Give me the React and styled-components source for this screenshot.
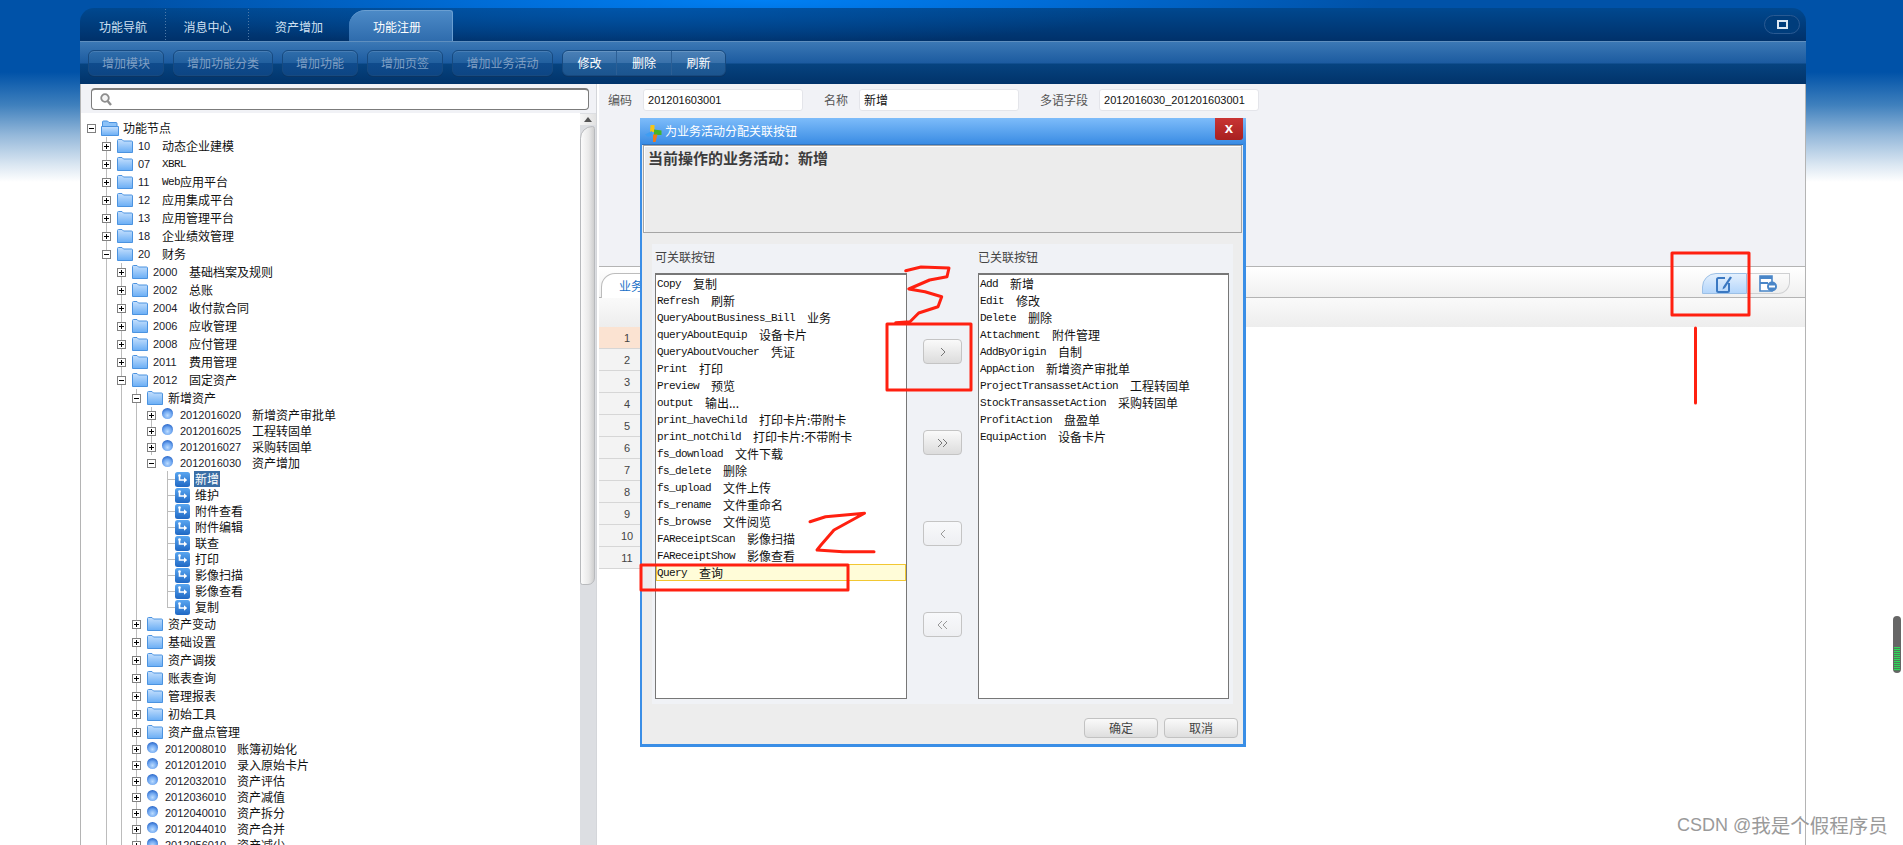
import React from 'react';
import styled, { createGlobalStyle } from 'styled-components';

const CJK = '"Noto Sans CJK SC", "Liberation Sans", sans-serif';
const LATIN = '"Liberation Sans", "Noto Sans CJK SC", sans-serif';
const MONO = '"Liberation Mono", monospace';

const Global = createGlobalStyle`
  html, body { margin: 0; padding: 0; height: 845px; overflow: hidden; background: #fff; }
  * { box-sizing: border-box; }
`;

const Page = styled.div`
  position: relative;
  width: 1903px;
  height: 845px;
  overflow: hidden;
  padding: 8px 97px 0 80px;
  font: 12px/16px ${CJK};
  color: #111;
  background:
    radial-gradient(ellipse 620px 46px at 40% 0, #0080f4 0%, rgba(0, 120, 235, 0.7) 45%, rgba(0, 90, 180, 0) 100%),
    linear-gradient(180deg, #0052a8 0, #0052a8 72px, #3f80bd 105px, #94b8da 135px, #dbe7f2 165px, #fff 182px);
`;

const Window = styled.div`
  display: flex;
  flex-direction: column;
  height: 837px;
  border-radius: 14px 14px 0 0;
  overflow: hidden;
`;

/* ---------- top tabs ---------- */
const TabStrip = styled.div`
  flex: none;
  height: 33px;
  display: flex;
  align-items: flex-end;
  position: relative;
  background:
    radial-gradient(ellipse 500px 40px at 32% 0, rgba(0, 90, 180, 0.7), rgba(0, 90, 180, 0)),
    linear-gradient(180deg, #00488f, #00316a);
`;
const Tab = styled.div`
  width: ${p => p.$w}px;
  height: ${p => (p.$active ? 31 : 33)}px;
  display: flex;
  align-items: center;
  justify-content: center;
  padding-top: ${p => (p.$active ? 2 : 4)}px;
  padding-right: ${p => (p.$active ? 7 : 0)}px;
  color: ${p => (p.$active ? '#fff' : '#cfe0f2')};
  font-size: 12px;
  ${p => (p.$sep ? 'background: linear-gradient(#4f7aa8 50%, transparent 50%) right 4px / 1px 3px repeat-y;' : '')}
  ${p =>
    p.$active
      ? `border-radius: 16px 3px 0 0;
         background: linear-gradient(180deg, #4c8ac7, #2f6cad);
         border-top: 1px solid #6a9fd2;
         border-right: 1px solid #6a9fd2;`
      : ''}
`;
const MaxButton = styled.div`
  position: absolute;
  right: 6px;
  top: 7px;
  width: 36px;
  height: 19px;
  border-radius: 10px;
  border: 1px solid #2a5a92;
  background: #003d7c;
  display: flex;
  align-items: center;
  justify-content: center;
`;
const MaxGlyph = styled.span`
  display: block;
  width: 11px;
  height: 9px;
  border: 2px solid #dce8f4;
  background: #003d7c;
`;

/* ---------- toolbar ---------- */
const Toolbar = styled.div`
  flex: none;
  height: 43px;
  padding: 8px 0 0 8px;
  display: flex;
  align-items: flex-start;
  gap: 9px;
  border-top: 1px solid #5f8fbf;
  background: linear-gradient(180deg, #3b78b5 0, #1c5ba0 21px, #06437f 22px, #01336a 100%);
`;
const ToolButton = styled.div`
  width: ${p => p.$w}px;
  height: 26px;
  border-radius: 6px;
  border: 1px solid #174a80;
  box-shadow: inset 0 1px 0 rgba(255, 255, 255, 0.12), 0 1px 0 #0b3564;
  background: linear-gradient(180deg, #2f6dab 0, #22609f 48%, #0f4b8c 52%, #0d4584 100%);
  color: #7f9fc4;
  display: flex;
  align-items: center;
  justify-content: center;
`;
const ToolGroup = styled.div`
  display: flex;
  height: 26px;
  border-radius: 6px;
  border: 1px solid #174a80;
  overflow: hidden;
  box-shadow: inset 0 1px 0 rgba(255, 255, 255, 0.15), 0 1px 0 #0b3564;
  background: linear-gradient(180deg, #4a80b7 0, #3a72ab 48%, #1f5c98 52%, #1c558f 100%);
`;
const GroupButton = styled.div`
  width: ${p => p.$w}px;
  display: flex;
  align-items: center;
  justify-content: center;
  color: #fff;
  & + & { border-left: 1px solid #2c5f95; }
`;

/* ---------- content ---------- */
const Content = styled.div`
  flex: 1;
  min-height: 0;
  display: flex;
  border-left: 1px solid #b4b4b4;
  border-right: 1px solid #b4b4b4;
  background: #fff;
`;
const LeftPanel = styled.div`
  flex: none;
  width: 516px;
  display: flex;
  flex-direction: column;
  border-right: 1px solid #d4d6da;
`;
const SearchRow = styled.div`
  flex: none;
  height: 29px;
  padding: 4px 8px 3px 10px;
  background: #f1f2f6;
`;
const SearchBox = styled.div`
  height: 22px;
  width: 498px;
  border: 1px solid #7b7b7b;
  border-top-width: 2px;
  border-radius: 4px;
  background: #fff;
  display: flex;
  align-items: center;
  padding-left: 8px;
`;
const TreeArea = styled.div`
  flex: 1;
  min-height: 0;
  display: flex;
  overflow: hidden;
`;
const TreeScroll = styled.div`
  flex: 1;
  min-width: 0;
  overflow: hidden;
  padding: 6px 0 0 11px;
`;
const ScrollBar = styled.div`
  flex: none;
  width: 16px;
  display: flex;
  flex-direction: column;
  background: #dcdee2;
`;
const ScrollArrow = styled.div`
  flex: none;
  height: 11px;
  margin-top: 1px;
  display: flex;
  justify-content: center;
  align-items: center;
  background: linear-gradient(90deg, #f6f6f6, #e2e2e2);
  &::before {
    content: '';
    border-left: 4px solid transparent;
    border-right: 4px solid transparent;
    border-bottom: 5px solid #555;
  }
`;
const ScrollThumb = styled.div`
  flex: none;
  height: 459px;
  margin: 1px 1px 0 0;
  border-radius: 14px 3px 8px 3px;
  border: 1px solid #b8babd;
  background: linear-gradient(90deg, #fbfbfb, #e9e9e9 60%, #cfcfcf);
`;

const Branch = styled.div`
  border-left: 1px solid ${p => (p.$line ? '#bcbcbc' : 'transparent')};
`;
const Kids = styled.div`
  margin-left: 14px;
`;
const LeafList = styled.div`
  margin-left: 15px;
`;
const RootRow = styled.div`
  margin-left: -5px;
  height: 18px;
  display: flex;
  align-items: center;
  white-space: nowrap;
`;
const Row = styled.div`
  margin-left: -5px;
  height: ${p => p.$h}px;
  display: flex;
  align-items: center;
  white-space: nowrap;
`;
const ExpanderBox = styled.span`
  flex: none;
  width: 9px;
  height: 9px;
  border: 1px solid #808080;
  background: #fff;
  position: relative;
  &::before {
    content: '';
    position: absolute;
    left: 1px;
    right: 1px;
    top: 3px;
    height: 1px;
    background: #000;
  }
  &::after {
    content: '';
    display: ${p => (p.$open ? 'none' : 'block')};
    position: absolute;
    top: 1px;
    bottom: 1px;
    left: 3px;
    width: 1px;
    background: #000;
  }
`;
const IconSlot = styled.span`
  flex: none;
  display: flex;
  margin-left: ${p => p.$ml}px;
  margin-right: ${p => p.$mr}px;
  align-self: ${p => (p.$top ? 'flex-start' : 'center')};
  margin-top: ${p => p.$mt || 0}px;
`;
const Code = styled.span`
  flex: none;
  width: ${p => p.$len * 6 + 12}px;
  font: 11px/16px ${LATIN};
  color: #1a1a2a;
`;
const Name = styled.span`
  color: #111;
`;
const MonoText = styled.span`
  font: 11px/16px ${MONO};
  letter-spacing: -0.6px;
`;
const LeafRow = styled.div`
  height: 16px;
  display: flex;
  align-items: flex-start;
  white-space: nowrap;
`;
const LeafStub = styled.span`
  flex: none;
  width: 8px;
  height: ${p => (p.$last ? 9 : 16)}px;
  border-left: 1px solid #bcbcbc;
  background: linear-gradient(#bcbcbc, #bcbcbc) left 8px / 100% 1px no-repeat;
`;
const LeafLabel = styled.span`
  margin-left: 4px;
  padding: 0 1px;
  height: 16px;
  line-height: 16px;
  background: ${p => (p.$selected ? '#3a6ea5' : 'transparent')};
  color: ${p => (p.$selected ? '#fff' : '#111')};
`;

/* ---------- right ---------- */
const RightPanel = styled.div`
  flex: 1;
  min-width: 0;
  margin-left: 2px;
  display: flex;
  flex-direction: column;
  background: #fff;
`;
const FormArea = styled.div`
  flex: none;
  height: 182px;
  padding: 5px 0 0 9px;
  display: flex;
  align-items: flex-start;
  gap: 21px;
  background: #f1f2f6;
`;
const Field = styled.div`
  display: flex;
  align-items: center;
  gap: 11px;
`;
const FieldLabel = styled.span`
  color: #555;
`;
const FieldInput = styled.div`
  width: 160px;
  height: 22px;
  padding-left: 4px;
  border: 1px solid #e4e5ea;
  border-radius: 3px;
  background: #fff;
  display: flex;
  align-items: center;
  font: ${p => (p.$cjk ? `12px/16px ${CJK}` : `11px/16px ${LATIN}`)};
  color: #111;
`;
const SubTabBar = styled.div`
  flex: none;
  height: 32px;
  padding: 6px 15px 0 2px;
  display: flex;
  align-items: flex-start;
  justify-content: space-between;
  border-top: 1px solid #b4b4b4;
  border-bottom: 1px solid #b4b4b4;
  background: linear-gradient(180deg, #fff, #f0f0f0);
`;
const SubTab = styled.div`
  width: 90px;
  height: 25px;
  border: 1px solid #bcbcbc;
  border-bottom: none;
  border-radius: 14px 4px 0 0;
  background: #fff;
  color: #1a70c8;
  padding: 4px 0 0 17px;
`;
const IconTabs = styled.div`
  display: flex;
  width: 88px;
  height: 21px;
`;
const IconTab = styled.div`
  flex: 1;
  display: flex;
  align-items: center;
  justify-content: center;
  ${p =>
    p.$active
      ? `border: 1px solid #9cc0e6; border-radius: 14px 0 0 0;
         background: linear-gradient(180deg, #e4f0fd, #b4d6fb);`
      : `border: 1px solid #cfd0d2; border-left: none; border-radius: 0 0 12px 0;
         background: linear-gradient(180deg, #fbfbfb, #eeeeee);`}
`;
const GridHead = styled.div`
  flex: none;
  height: 29px;
  background: linear-gradient(180deg, #fafafa, #ededed);
`;
const RowNumbers = styled.div`
  width: 56px;
`;
const RowNumber = styled.div`
  height: 22px;
  display: flex;
  align-items: center;
  justify-content: center;
  border-bottom: 1px solid #d6d6d6;
  background: ${p => (p.$active ? '#fbe3d2' : '#f3f3f3')};
  font: 11px/16px ${LATIN};
  color: #444;
`;

/* ---------- dialog ---------- */
const Dialog = styled.div`
  position: absolute;
  left: 640px;
  top: 118px;
  width: 606px;
  height: 629px;
  display: flex;
  flex-direction: column;
  background: #3a8ee6;
  z-index: 5;
`;
const DialogTitle = styled.div`
  flex: none;
  height: 26px;
  display: flex;
  align-items: flex-start;
  padding-left: 5px;
  background: linear-gradient(180deg, #7dbcfa, #3a8ce4);
  color: #fff;
`;
const TitleText = styled.span`
  margin-left: 3px;
  line-height: 25px;
  flex: 1;
`;
const CloseBtn = styled.div`
  width: 28px;
  height: 22px;
  margin-right: 3px;
  border-radius: 0 0 3px 3px;
  background: linear-gradient(180deg, #c83434, #a82020);
  color: #fff;
  font: bold 15px/19px "Liberation Sans", sans-serif;
  text-align: center;
`;
const DialogBody = styled.div`
  flex: 1;
  min-height: 0;
  margin: 0 3px 3px 2px;
  background: #ededed;
  display: flex;
  flex-direction: column;
  border-top: 1px solid #2f72bd;
`;
const DialogHeader = styled.div`
  flex: none;
  height: 88px;
  margin: 0 1px 0 1px;
  padding: 2px 0 0 4px;
  border: 1px solid #a5a5a5;
  box-shadow: inset 1px 1px 0 #fff;
  font: bold 15px/20px ${CJK};
  color: #3c3c3c;
  background: #ececec;
`;
const Selector = styled.div`
  flex: none;
  height: 460px;
  margin: 11px 10px 0 10px;
  padding: 4px 3px;
  display: grid;
  grid-template-columns: 252px 71px 251px;
  grid-template-rows: 25px 426px;
  background: #f0f2f6;
`;
const ListTitle = styled.div`
  color: #444;
  line-height: 18px;
`;
const MoveColumn = styled.div`
  display: flex;
  flex-direction: column;
  align-items: center;
  gap: 66px;
  padding-top: 66px;
`;
const MoveBtn = styled.div`
  width: 39px;
  height: 25px;
  border-radius: 4px;
  border: 1px solid #c4c4c4;
  display: flex;
  align-items: center;
  justify-content: center;
  background: ${p => (p.$on ? 'linear-gradient(180deg, #fafafa, #dcdcdc)' : 'linear-gradient(180deg, #f8f9fb, #eeeff2)')};
`;
const ListBox = styled.div`
  background: #fff;
  border: 1px solid #777;
  border-top-width: 2px;
  overflow: hidden;
`;
const ListRow = styled.div`
  height: 17px;
  display: flex;
  align-items: center;
  white-space: nowrap;
  padding-left: 1px;
  ${p => (p.$hl ? 'background: #fffcd8; box-shadow: inset 0 0 0 1px #f2c732;' : '')}
`;
const ListName = styled.span`
  margin-left: 12px;
  line-height: 16px;
`;
const DialogFooter = styled.div`
  flex: 1;
  display: flex;
  justify-content: flex-end;
  align-items: flex-start;
  gap: 6px;
  padding: 14px 5px 0 0;
`;
const FootBtn = styled.div`
  width: 74px;
  height: 20px;
  border: 1px solid #c2c2c2;
  border-radius: 4px;
  background: linear-gradient(180deg, #fafafa, #dedede);
  color: #444;
  display: flex;
  align-items: center;
  justify-content: center;
`;

/* ---------- overlays ---------- */
const Annotations = styled.svg`
  position: absolute;
  left: 0;
  top: 0;
  z-index: 10;
  pointer-events: none;
`;
const SideWidget = styled.div`
  position: absolute;
  left: 1893px;
  top: 616px;
  width: 8px;
  height: 57px;
  border-radius: 4px;
  padding: 31px 1px 2px;
  background: #666;
  z-index: 6;
`;
const SideStripes = styled.div`
  height: 100%;
  background: repeating-linear-gradient(180deg, #2fd65a 0 1px, #4c7c58 1px 2px);
`;
const Watermark = styled.div`
  position: absolute;
  left: 1677px;
  top: 811px;
  display: flex;
  align-items: center;
  height: 28px;
  white-space: nowrap;
  color: #9a9a9a;
  text-shadow: 0 0 1px rgba(255, 255, 255, 0.8);
  font: 18px/28px ${LATIN};
  z-index: 6;
`;
const WatermarkCjk = styled.span`
  font: 19.5px/28px ${CJK};
`;

/* ---------- icons ---------- */
const Folder = () => (
  <svg width="16" height="14" viewBox="0 0 16 14">
    <defs>
      <linearGradient id="fg" x1="0" y1="0" x2="0" y2="1">
        <stop offset="0" stopColor="#c6e0fd" />
        <stop offset="1" stopColor="#6aaef5" />
      </linearGradient>
    </defs>
    <path d="M.5 13.5V1.5q0-1 1-1h3.5l1.5 1.5h8q1 0 1 1v10.5z" fill="url(#fg)" stroke="#4b93e0" />
  </svg>
);
const OpenFolder = () => (
  <svg width="18" height="16" viewBox="0 0 18 16">
    <path d="M1.5 14V2q0-1 1-1h4l1.5 1.5h7q1 0 1 1V7H1.5z" fill="#8cc2f8" stroke="#4b93e0" />
    <path d="M.5 15.5 .5 6.5h17v9z" fill="url(#fg)" stroke="#4b93e0" />
  </svg>
);
const Bullet = () => (
  <svg width="11" height="11" viewBox="0 0 11 11">
    <defs>
      <radialGradient id="bg" cx="0.5" cy="0.68" r="0.7">
        <stop offset="0" stopColor="#bcdcff" />
        <stop offset="0.55" stopColor="#6ea6f0" />
        <stop offset="1" stopColor="#2260c4" />
      </radialGradient>
    </defs>
    <circle cx="5.5" cy="5.5" r="5.5" fill="url(#bg)" />
  </svg>
);
const LeafIcon = () => (
  <svg width="15" height="15" viewBox="0 0 15 15">
    <defs>
      <linearGradient id="lg" x1="0" y1="0" x2="0" y2="1">
        <stop offset="0" stopColor="#5aa6f0" />
        <stop offset="1" stopColor="#1f68c4" />
      </linearGradient>
    </defs>
    <rect width="15" height="15" rx="2.5" fill="url(#lg)" />
    <path d="M4.5 3.5V8h5" fill="none" stroke="#fff" strokeWidth="1.6" />
    <path d="M9 5.2 12.2 8 9 10.8z" fill="#fff" />
    <circle cx="4.5" cy="3.5" r="1.3" fill="#fff" />
  </svg>
);
const SearchIcon = () => (
  <svg width="12" height="13" viewBox="0 0 12 13">
    <circle cx="5" cy="5" r="3.8" fill="#f4f4f4" stroke="#8d8d8d" strokeWidth="1.8" />
    <path d="M7.6 8 11 12" stroke="#8d8d8d" strokeWidth="2.4" />
  </svg>
);
const DialogLogo = () => (
  <svg width="17" height="17" viewBox="0 0 17 17">
    <path d="M5.5 0h4v7h-4.500z" fill="#f5c518" />
    <path d="M9 4.500l7.500 1v4.500H9z" fill="#46b528" />
    <path d="M8 9.500h4.500L10.500 17H8z" fill="#ef7a1a" />
    <path d="M0 9.500 7 6v4.500L3 12z" fill="#3f9df2" />
  </svg>
);
const EditIcon = () => (
  <svg width="17" height="18" viewBox="0 0 17 18">
    <path d="M9 3H2.500Q1 3 1 4.500v11Q1 17 2.500 17h9q1.500 0 1.500-1.500V8" fill="none" stroke="#3a78c2" strokeWidth="2" />
    <path d="M7 12 14 1.500l2 1L9 13l-2.500 1.500z" fill="#3a78c2" />
  </svg>
);
const FormMinusIcon = () => (
  <svg width="18" height="17" viewBox="0 0 18 17">
    <path d="M1 1h12v15H1z" fill="#fff" stroke="#4a86c8" strokeWidth="1.600" />
    <path d="M1 1h12v3H1zM1 7h8v2H1z" fill="#4a86c8" />
    <circle cx="13" cy="11.500" r="5" fill="#4a86c8" />
    <path d="M10 11.500h6" stroke="#fff" strokeWidth="2" />
  </svg>
);
const Chevrons = ({ dir, n, color }) => {
  const pts = x => (dir === 'r' ? `${x},1 ${x + 4},5 ${x},9` : `${x + 4},1 ${x},5 ${x + 4},9`);
  return (
    <svg width="12" height="10" viewBox="0 0 12 10">
      <polyline points={pts(n === 2 ? 1 : 4)} fill="none" stroke={color} />
      {n === 2 && <polyline points={pts(6)} fill="none" stroke={color} />}
    </svg>
  );
};

/* ---------- data ---------- */
const folder = (code, name, kids, extra) => ({ t: 'f', code, name, kids, ...extra });
const bullet = (code, name, leaves, extra) => ({ t: 'b', code, name, leaves, ...extra });

const tree = [
  folder('10', '动态企业建模'),
  folder('07', '', null, { mono: 'XBRL' }),
  folder('11', '应用平台', null, { mono: 'Web' }),
  folder('12', '应用集成平台'),
  folder('13', '应用管理平台'),
  folder('18', '企业绩效管理'),
  folder('20', '财务', [
    folder('2000', '基础档案及规则'),
    folder('2002', '总账'),
    folder('2004', '收付款合同'),
    folder('2006', '应收管理'),
    folder('2008', '应付管理'),
    folder('2011', '费用管理'),
    folder('2012', '固定资产', [
      folder('', '新增资产', [
        bullet('2012016020', '新增资产审批单'),
        bullet('2012016025', '工程转固单'),
        bullet('2012016027', '采购转固单'),
        bullet('2012016030', '资产增加', ['新增', '维护', '附件查看', '附件编辑', '联查', '打印', '影像扫描', '影像查看', '复制'], { end: true }),
      ]),
      folder('', '资产变动'),
      folder('', '基础设置'),
      folder('', '资产调拨'),
      folder('', '账表查询'),
      folder('', '管理报表'),
      folder('', '初始工具'),
      folder('', '资产盘点管理'),
      bullet('2012008010', '账簿初始化'),
      bullet('2012012010', '录入原始卡片'),
      bullet('2012032010', '资产评估'),
      bullet('2012036010', '资产减值'),
      bullet('2012040010', '资产拆分'),
      bullet('2012044010', '资产合并'),
      bullet('2012056010', '资产减少'),
    ]),
  ]),
];

const available = [
  ['Copy', '复制'], ['Refresh', '刷新'], ['QueryAboutBusiness_Bill', '业务'], ['queryAboutEquip', '设备卡片'],
  ['QueryAboutVoucher', '凭证'], ['Print', '打印'], ['Preview', '预览'], ['output', '输出...'],
  ['print_haveChild', '打印卡片:带附卡'], ['print_notChild', '打印卡片:不带附卡'], ['fs_download', '文件下载'],
  ['fs_delete', '删除'], ['fs_upload', '文件上传'], ['fs_rename', '文件重命名'], ['fs_browse', '文件阅览'],
  ['FAReceiptScan', '影像扫描'], ['FAReceiptShow', '影像查看'], ['Query', '查询'],
];
const linked = [
  ['Add', '新增'], ['Edit', '修改'], ['Delete', '删除'], ['Attachment', '附件管理'], ['AddByOrigin', '自制'],
  ['AppAction', '新增资产审批单'], ['ProjectTransassetAction', '工程转固单'], ['StockTransassetAction', '采购转固单'],
  ['ProfitAction', '盘盈单'], ['EquipAction', '设备卡片'],
];

const TreeNode = ({ node }) => {
  const open = !!(node.kids || node.leaves);
  if (node.t === 'b') {
    return (
      <Branch $line={!node.end}>
        <Row $h={16}>
          <ExpanderBox $open={open} />
          <IconSlot $ml={6} $mr={7} $top $mt={1}><Bullet /></IconSlot>
          <Code $len={node.code.length}>{node.code}</Code>
          <Name>{node.name}</Name>
        </Row>
        {node.leaves && (
          <LeafList>
            {node.leaves.map((leaf, i) => (
              <LeafRow key={leaf}>
                <LeafStub $last={i === node.leaves.length - 1} />
                <IconSlot $ml={0} $mr={0}><LeafIcon /></IconSlot>
                <LeafLabel $selected={i === 0}>{leaf}</LeafLabel>
              </LeafRow>
            ))}
          </LeafList>
        )}
      </Branch>
    );
  }
  return (
    <Branch $line>
      <Row $h={18}>
        <ExpanderBox $open={open} />
        <IconSlot $ml={6} $mr={5}><Folder /></IconSlot>
        {node.code && <Code $len={node.code.length}>{node.code}</Code>}
        {node.mono && <MonoText>{node.mono}</MonoText>}
        <Name>{node.name}</Name>
      </Row>
      {node.kids && (
        <Kids>
          {node.kids.map(k => <TreeNode key={k.code + k.name} node={k} />)}
        </Kids>
      )}
    </Branch>
  );
};

const ListItems = ({ items, hl }) => items.map(([c, n]) => (
  <ListRow key={c} $hl={c === hl}>
    <MonoText>{c}</MonoText>
    <ListName>{n}</ListName>
  </ListRow>
));

export default function App() {
  return (
    <Page>
      <Global />
      <Window>
        <TabStrip>
          <Tab $w={86} $sep>功能导航</Tab>
          <Tab $w={83} $sep>消息中心</Tab>
          <Tab $w={100}>资产增加</Tab>
          <Tab $w={104} $active>功能注册</Tab>
          <MaxButton><MaxGlyph /></MaxButton>
        </TabStrip>
        <Toolbar>
          <ToolButton $w={76}>增加模块</ToolButton>
          <ToolButton $w={100}>增加功能分类</ToolButton>
          <ToolButton $w={76}>增加功能</ToolButton>
          <ToolButton $w={76}>增加页签</ToolButton>
          <ToolButton $w={101}>增加业务活动</ToolButton>
          <ToolGroup>
            <GroupButton $w={53}>修改</GroupButton>
            <GroupButton $w={55}>删除</GroupButton>
            <GroupButton $w={54}>刷新</GroupButton>
          </ToolGroup>
        </Toolbar>
        <Content>
          <LeftPanel>
            <SearchRow>
              <SearchBox><SearchIcon /></SearchBox>
            </SearchRow>
            <TreeArea>
              <TreeScroll>
                <RootRow>
                  <ExpanderBox $open />
                  <IconSlot $ml={5} $mr={4}><OpenFolder /></IconSlot>
                  <Name>功能节点</Name>
                </RootRow>
                <Kids>
                  {tree.map(k => <TreeNode key={k.code} node={k} />)}
                </Kids>
              </TreeScroll>
              <ScrollBar>
                <ScrollArrow />
                <ScrollThumb />
              </ScrollBar>
            </TreeArea>
          </LeftPanel>
          <RightPanel>
            <FormArea>
              <Field>
                <FieldLabel>编码</FieldLabel>
                <FieldInput>201201603001</FieldInput>
              </Field>
              <Field>
                <FieldLabel>名称</FieldLabel>
                <FieldInput $cjk>新增</FieldInput>
              </Field>
              <Field>
                <FieldLabel>多语字段</FieldLabel>
                <FieldInput>2012016030_201201603001</FieldInput>
              </Field>
            </FormArea>
            <SubTabBar>
              <SubTab>业务</SubTab>
              <IconTabs>
                <IconTab $active><EditIcon /></IconTab>
                <IconTab><FormMinusIcon /></IconTab>
              </IconTabs>
            </SubTabBar>
            <GridHead />
            <RowNumbers>
              {Array.from({ length: 11 }, (_, i) => (
                <RowNumber key={i} $active={i === 0}>{i + 1}</RowNumber>
              ))}
            </RowNumbers>
          </RightPanel>
        </Content>
      </Window>

      <Dialog>
        <DialogTitle>
          <IconSlot $ml={0} $mr={0} $mt={4}><DialogLogo /></IconSlot>
          <TitleText>为业务活动分配关联按钮</TitleText>
          <CloseBtn>x</CloseBtn>
        </DialogTitle>
        <DialogBody>
          <DialogHeader>当前操作的业务活动：新增</DialogHeader>
          <Selector>
            <ListTitle>可关联按钮</ListTitle>
            <span />
            <ListTitle>已关联按钮</ListTitle>
            <ListBox><ListItems items={available} hl="Query" /></ListBox>
            <MoveColumn>
              <MoveBtn $on><Chevrons dir="r" n={1} color="#777" /></MoveBtn>
              <MoveBtn $on><Chevrons dir="r" n={2} color="#777" /></MoveBtn>
              <MoveBtn><Chevrons dir="l" n={1} color="#999" /></MoveBtn>
              <MoveBtn><Chevrons dir="l" n={2} color="#999" /></MoveBtn>
            </MoveColumn>
            <ListBox><ListItems items={linked} /></ListBox>
          </Selector>
          <DialogFooter>
            <FootBtn>确定</FootBtn>
            <FootBtn>取消</FootBtn>
          </DialogFooter>
        </DialogBody>
      </Dialog>

      <Annotations width="1903" height="845" viewBox="0 0 1903 845" fill="none" stroke="#ff2010" strokeWidth="3" strokeLinejoin="round" strokeLinecap="round">
        <rect x="887" y="324" width="84" height="66" />
        <rect x="641" y="565" width="207" height="25" />
        <rect x="1672" y="253" width="77" height="62" />
        <path d="M1695.500 328V403" />
        <path d="M905.700 270.700L921 267L949 268L947 276.700L929.600 280L908.800 289L925 291.700L941.700 296.700L938 306.700L918.700 313L910 321.700L895.700 322.700" />
        <path d="M810 521.700L825.500 516.700L864.500 513.300L849 521.700L834 530L821 545L817 550L843 551.700L874 551.700" />
      </Annotations>

      <SideWidget><SideStripes /></SideWidget>
      <Watermark>CSDN @<WatermarkCjk>我是个假程序员</WatermarkCjk></Watermark>
    </Page>
  );
}
